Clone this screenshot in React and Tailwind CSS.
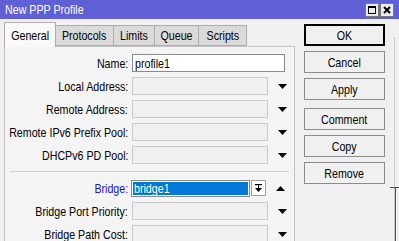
import React from "react";

const Arrow = ({ up }) => (
  <svg width="9" height="5" viewBox="0 0 9 5" className="block">
    {up ? <polygon points="0,5 9,5 4.5,0" fill="#000" /> : <polygon points="0,0 9,0 4.5,5" fill="#000" />}
  </svg>
);

const TR = ({ children }) => <span className="inline-block whitespace-nowrap scale-x-[0.82] origin-right">{children}</span>;
const TC = ({ children }) => <span className="inline-block whitespace-nowrap scale-x-[0.82] origin-center">{children}</span>;
const TL = ({ children }) => <span className="inline-block whitespace-nowrap scale-x-[0.82] origin-left">{children}</span>;

const Row = ({ label, children, blue }) => (
  <div className="flex items-center h-[18px]">
    <div className={`w-[123px] flex justify-end whitespace-nowrap ${blue ? "text-[#1515c8]" : "text-black"}`}><TR>{label}</TR></div>
    <div className="ml-[4px] flex items-center">{children}</div>
  </div>
);

const Empty = () => (
  <>
    <div className="w-[136px] h-[18px] border border-[#c9c9c9] bg-[#f0f0f0]" />
    <div className="w-[26px] flex justify-center pl-[2px]"><Arrow /></div>
  </>
);

const Btn = ({ children, def, cls = "" }) => (
  <div className={`w-[81px] h-[22px] flex items-center justify-center bg-[#f0f0f0] ${def ? "border-2 border-black" : "border border-[#8c8c8c]"} ${cls}`}>
    <TC>{children}</TC>
  </div>
);

const Tab = ({ children, w, active }) =>
  active ? (
    <div className={`${w} h-[25px] bg-[#f9f9f9] border border-b-0 border-[#adadad] flex items-center justify-center relative z-10 -mb-[1px]`}><TC>{children}</TC></div>
  ) : (
    <div className={`${w} h-[21px] bg-[#dadada] border border-l-0 border-[#adadad] flex items-center justify-center`}><TC>{children}</TC></div>
  );

export default function App() {
  return (
    <div
      className="w-[399px] h-[241px] overflow-hidden bg-[#f0f0f0] text-[13px] leading-none relative"
      style={{ fontFamily: '"Liberation Sans", Arial, sans-serif' }}
    >
      {/* title bar */}
      <div className="h-[19px] bg-[#5f5fd6] flex items-center justify-between pl-[5px] pr-[5px]">
        <span className="text-white text-[13px]"><TL>New PPP Profile</TL></span>
        <div className="flex gap-[1px]">
          <div className="w-[14px] h-[14px] bg-[#eaeaea] border border-[#7a7a7a] flex items-center justify-center">
            <div className="w-[8px] h-[8px] border border-black border-t-2" />
          </div>
          <div className="w-[14px] h-[14px] bg-[#eaeaea] border border-[#7a7a7a] flex items-center justify-center">
            <svg width="8" height="8" viewBox="0 0 8 8"><path d="M1 1 L7 7 M7 1 L1 7" stroke="#000" strokeWidth="2" /></svg>
          </div>
        </div>
      </div>

      <div className="flex">
        {/* left */}
        <div className="pl-[4px] w-[295px]">
          <div className="flex items-end h-[27px]">
            <Tab w="w-[52px]" active>General</Tab>
            <Tab w="w-[58px]">Protocols</Tab>
            <Tab w="w-[41px]">Limits</Tab>
            <Tab w="w-[44px]">Queue</Tab>
            <Tab w="w-[48px]">Scripts</Tab>
          </div>
          <div className="border border-[#c4c4c4] bg-[#f4f4f4] h-[200px] pt-[7px] flex flex-col gap-[5px]">
            <Row label="Name:">
              <div className="w-[153px] h-[18px] border border-[#8a8a8a] bg-white flex items-center pl-[2px]"><TL>profile1</TL></div>
            </Row>
            <Row label="Local Address:"><Empty /></Row>
            <Row label="Remote Address:"><Empty /></Row>
            <Row label="Remote IPv6 Prefix Pool:"><Empty /></Row>
            <Row label="DHCPv6 PD Pool:"><Empty /></Row>
            <div className="h-[1px] bg-[#cfcfcf] mx-[5px] my-[2px]" />
            <Row label="Bridge:" blue>
              <div className="w-[117px] h-[15px] bg-[#0078d7] text-white flex items-center pl-[1px] border border-white outline outline-1 outline-[#8a8a8a]"><TL>bridge1</TL></div>
              <div className="ml-[2px] w-[15px] h-[16px] border border-[#a0a0a0] bg-white flex items-center justify-center">
                <svg width="7" height="9" viewBox="0 0 7 9"><rect x="0" y="0" width="7" height="1.2" fill="#000" /><rect x="3" y="1" width="1" height="4" fill="#000" /><polygon points="0,4 7,4 3.5,8" fill="#000" /></svg>
              </div>
              <div className="w-[26px] flex justify-center pl-[2px]"><Arrow up /></div>
            </Row>
            <Row label="Bridge Port Priority:"><Empty /></Row>
            <Row label="Bridge Path Cost:"><Empty /></Row>
          </div>
        </div>

        {/* right buttons */}
        <div className="ml-[9px] pt-[5px] flex flex-col">
          <Btn def>OK</Btn>
          <Btn cls="mt-[5px] h-[21px]">Cancel</Btn>
          <Btn cls="mt-[5px] h-[21px]">Apply</Btn>
          <Btn cls="mt-[8px]">Comment</Btn>
          <Btn cls="mt-[5px] h-[21px]">Copy</Btn>
          <Btn cls="mt-[5px]">Remove</Btn>
        </div>
      </div>

      {/* right edge decor */}
      <div className="absolute left-[394px] top-[37px] bottom-0 w-[1px] bg-[#c8c8c8]" />
      <div className="absolute left-[390px] top-[187px] right-0 h-[1px] bg-[#505050]" />
      <div className="absolute left-[395px] top-[187px] bottom-0 w-[1px] bg-[#505050]" />
    </div>
  );
}
